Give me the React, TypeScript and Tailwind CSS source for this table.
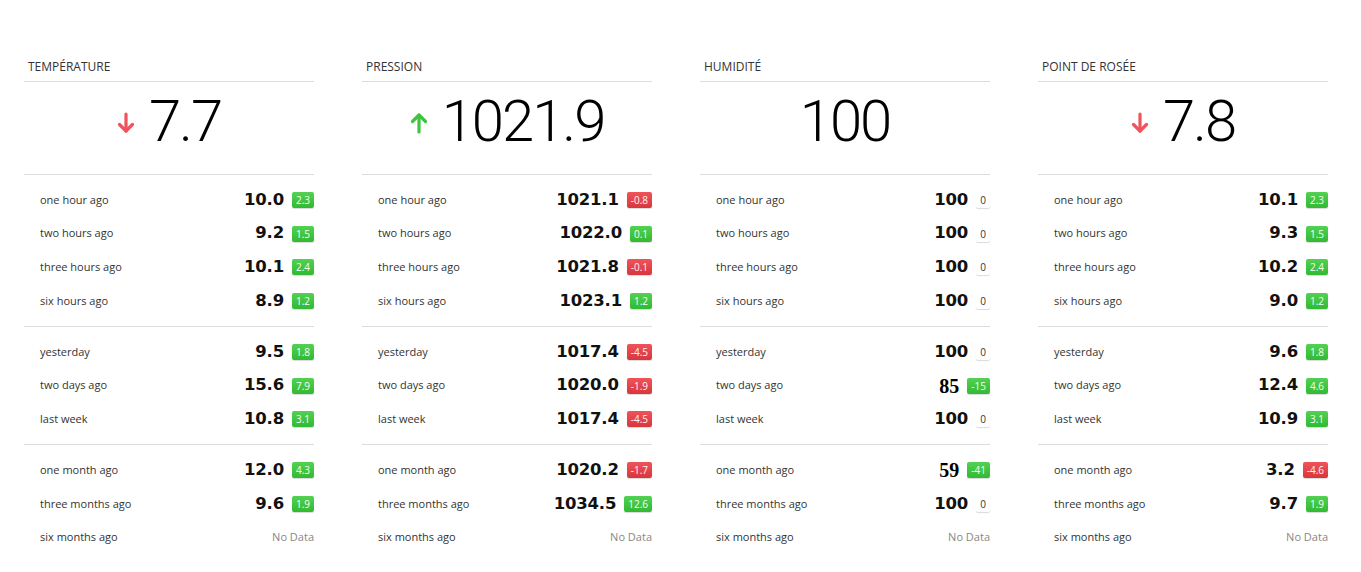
import React from "react";

type Row = { label: string; value?: string; delta?: string; serif?: boolean };
type Card = {
  title: string;
  big: string;
  trend: "up" | "down" | "none";
  sections: Row[][];
};

const cards: Card[] = [
  {
    title: "Température",
    big: "7.7",
    trend: "down",
    sections: [
      [
        { label: "one hour ago", value: "10.0", delta: "2.3" },
        { label: "two hours ago", value: "9.2", delta: "1.5" },
        { label: "three hours ago", value: "10.1", delta: "2.4" },
        { label: "six hours ago", value: "8.9", delta: "1.2" },
      ],
      [
        { label: "yesterday", value: "9.5", delta: "1.8" },
        { label: "two days ago", value: "15.6", delta: "7.9" },
        { label: "last week", value: "10.8", delta: "3.1" },
      ],
      [
        { label: "one month ago", value: "12.0", delta: "4.3" },
        { label: "three months ago", value: "9.6", delta: "1.9" },
        { label: "six months ago" },
      ],
    ],
  },
  {
    title: "Pression",
    big: "1021.9",
    trend: "up",
    sections: [
      [
        { label: "one hour ago", value: "1021.1", delta: "-0.8" },
        { label: "two hours ago", value: "1022.0", delta: "0.1" },
        { label: "three hours ago", value: "1021.8", delta: "-0.1" },
        { label: "six hours ago", value: "1023.1", delta: "1.2" },
      ],
      [
        { label: "yesterday", value: "1017.4", delta: "-4.5" },
        { label: "two days ago", value: "1020.0", delta: "-1.9" },
        { label: "last week", value: "1017.4", delta: "-4.5" },
      ],
      [
        { label: "one month ago", value: "1020.2", delta: "-1.7" },
        { label: "three months ago", value: "1034.5", delta: "12.6" },
        { label: "six months ago" },
      ],
    ],
  },
  {
    title: "Humidité",
    big: "100",
    trend: "none",
    sections: [
      [
        { label: "one hour ago", value: "100", delta: "0" },
        { label: "two hours ago", value: "100", delta: "0" },
        { label: "three hours ago", value: "100", delta: "0" },
        { label: "six hours ago", value: "100", delta: "0" },
      ],
      [
        { label: "yesterday", value: "100", delta: "0" },
        { label: "two days ago", value: "85", delta: "-15", serif: true },
        { label: "last week", value: "100", delta: "0" },
      ],
      [
        { label: "one month ago", value: "59", delta: "-41", serif: true },
        { label: "three months ago", value: "100", delta: "0" },
        { label: "six months ago" },
      ],
    ],
  },
  {
    title: "Point de rosée",
    big: "7.8",
    trend: "down",
    sections: [
      [
        { label: "one hour ago", value: "10.1", delta: "2.3" },
        { label: "two hours ago", value: "9.3", delta: "1.5" },
        { label: "three hours ago", value: "10.2", delta: "2.4" },
        { label: "six hours ago", value: "9.0", delta: "1.2" },
      ],
      [
        { label: "yesterday", value: "9.6", delta: "1.8" },
        { label: "two days ago", value: "12.4", delta: "4.6" },
        { label: "last week", value: "10.9", delta: "3.1" },
      ],
      [
        { label: "one month ago", value: "3.2", delta: "-4.6" },
        { label: "three months ago", value: "9.7", delta: "1.9" },
        { label: "six months ago" },
      ],
    ],
  },
];

function badgeKind(card: Card, delta: string): "green" | "red" | "zero" {
  if (delta === "0") return "zero";
  const neg = delta.startsWith("-");
  if (card.title === "Humidité") return "green";
  return neg ? "red" : "green";
}

function Badge({ kind, text }: { kind: "green" | "red" | "zero"; text: string }) {
  const cls =
    kind === "green"
      ? "bg-gradient-to-b from-[#52d152] to-[#32b932] text-[#f4fff4]"
      : kind === "red"
      ? "bg-gradient-to-b from-[#ef5358] to-[#d8363c] text-[#fff4f4]"
      : "bg-white text-[#333] shadow-[0_0_2px_rgba(0,0,0,0.3)]";
  return (
    <span
      className={`${cls} inline-flex h-[16px] min-w-[14px] items-center justify-center rounded-[2px] px-[4px] text-[10px] leading-none shadow-[0_1px_1px_rgba(0,0,0,0.15)]`}
      style={{ fontFamily: "'Open Sans', sans-serif" }}
    >
      {text}
    </span>
  );
}

function Arrow({ dir }: { dir: "up" | "down" }) {
  const color = dir === "down" ? "#f2525c" : "#3ec43e";
  return (
    <svg width="18" height="24" viewBox="0 0 18 24" className="mr-[14px] mt-[4px]">
      {dir === "down" ? (
        <g stroke={color} strokeWidth="3.2" fill="none" strokeLinecap="round" strokeLinejoin="round">
          <line x1="9" y1="3" x2="9" y2="20" />
          <polyline points="2.5,13.5 9,20 15.5,13.5" />
        </g>
      ) : (
        <g stroke={color} strokeWidth="3.2" fill="none" strokeLinecap="round" strokeLinejoin="round">
          <line x1="9" y1="4" x2="9" y2="21" />
          <polyline points="2.5,10.5 9,4 15.5,10.5" />
        </g>
      )}
    </svg>
  );
}

function CardView({ card }: { card: Card }) {
  return (
    <div className="px-6">
      <div className="border-b border-[#dcdcdc] pb-[6px] pl-[4px] text-[12px] uppercase leading-[17px] text-[#333]">
        {card.title}
      </div>
      <div className="flex h-[93px] items-center justify-center border-b border-[#dcdcdc] pb-[14px]">
        {card.trend !== "none" && <Arrow dir={card.trend} />}
        <span
          className="text-[58px] font-light leading-none tracking-[-2px] text-black"
          style={{ fontFamily: "Roboto, sans-serif" }}
        >
          {card.big}
        </span>
      </div>
      {card.sections.map((sec, si) => (
        <div
          key={si}
          className={`py-2 ${si < card.sections.length - 1 ? "border-b border-[#dcdcdc]" : ""}`}
        >
          {sec.map((r, ri) => (
            <div key={ri} className="flex h-[33.75px] items-center justify-between pl-4">
              <span className="text-[11px] text-[#333]">{r.label}</span>
              {r.value ? (
                <span className="flex items-center gap-2">
                  {r.serif ? (
                    <span
                      className="text-[20px] font-bold leading-none text-black"
                      style={{ fontFamily: "'Liberation Serif', serif" }}
                    >
                      {r.value}
                    </span>
                  ) : (
                    <span
                      className="text-[16.5px] font-bold tracking-[-0.2px] text-[#111]"
                      style={{ fontFamily: "'DejaVu Sans', sans-serif" }}
                    >
                      {r.value}
                    </span>
                  )}
                  <Badge kind={badgeKind(card, r.delta!)} text={r.delta!} />
                </span>
              ) : (
                <span className="text-[11px] text-[#888]">No Data</span>
              )}
            </div>
          ))}
        </div>
      ))}
    </div>
  );
}

export default function App() {
  return (
    <div
      className="min-h-[572px] w-[1361px] bg-white pt-[58px]"
      style={{ fontFamily: "'Open Sans', sans-serif" }}
    >
      <div className="grid w-[1352px] grid-cols-4">
        {cards.map((c) => (
          <CardView key={c.title} card={c} />
        ))}
      </div>
    </div>
  );
}
